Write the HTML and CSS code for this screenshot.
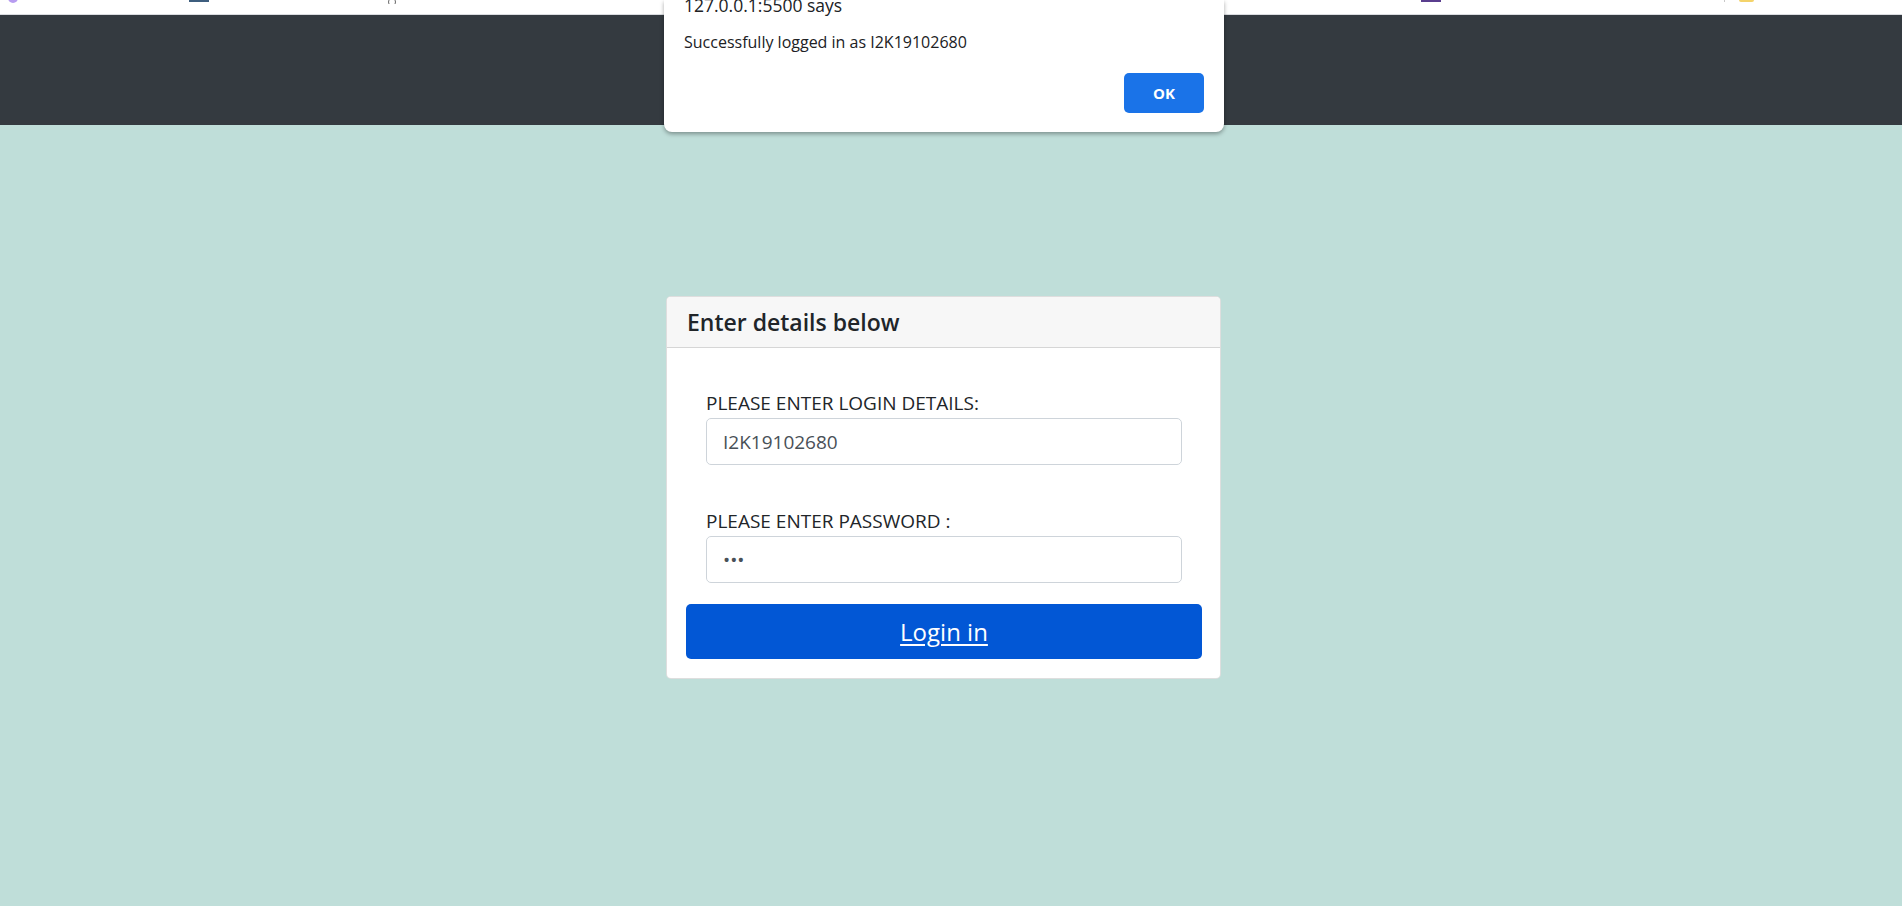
FILE: index.html
```html
<!DOCTYPE html>
<html lang="en">
<head>
<meta charset="utf-8">
<title>Login</title>
<link rel="stylesheet" href="styles.css">
</head>
<body>
<div class="bookmarks">
  <span class="bm bm-purple"></span>
  <span class="bm bm-blue"></span>
  <svg class="bm bm-paren" width="10" height="4" viewBox="0 0 10 4"><path d="M2 0 Q1 2 2 4 M8 0 Q9 2 8 4" stroke="#666" stroke-width="1" fill="none"/></svg>
  <span class="bm bm-violet"></span>
  <span class="bm bm-sep"></span>
  <span class="bm bm-yellow"></span>
</div>
<nav class="navbar"></nav>
<main class="main">
  <div class="card">
    <div class="card-header">Enter details below</div>
    <form class="card-body">
      <div class="field">
        <label class="label">PLEASE ENTER LOGIN DETAILS:</label>
        <input class="input" type="text" value="I2K19102680">
      </div>
      <div class="field field-2">
        <label class="label">PLEASE ENTER PASSWORD :</label>
        <input class="input" type="password" value="abc">
      </div>
      <button class="btn" type="button">Login in</button>
    </form>
  </div>
</main>
<div class="dialog">
  <div class="dialog-title">127.0.0.1:5500 says</div>
  <div class="dialog-msg">Successfully logged in as I2K19102680</div>
  <div class="dialog-actions"><button class="ok" type="button">OK</button></div>
</div>
</body>
</html>
```
FILE: styles.css
```css
html, body {
  margin: 0;
  padding: 0;
}
body {
  background: #bfded9;
  font-family: "Open Sans", "Noto Sans", sans-serif;
  color: #212529;
  height: 906px;
  overflow: hidden;
  position: relative;
}
.bookmarks {
  height: 14px;
  background: #fff;
  border-bottom: 1px solid #dadce0;
  display: flex;
  align-items: flex-start;
  overflow: hidden;
}
.bm { display: block; flex: none; }
.bm-purple {
  width: 10px; height: 5px; margin-left: 8px; margin-top: -2px;
  background: #b79cf0; border-radius: 0 0 5px 5px;
}
.bm-blue {
  width: 20px; height: 2px; margin-left: 171px;
  background: #3e5e7e;
}
.bm-paren {
  margin-left: 178px;
}
.bm-violet {
  width: 20px; height: 2px; margin-left: 1024px;
  background: #5a3e8e;
}
.bm-sep {
  width: 1px; height: 2px; margin-left: 283px;
  background: #c8c8c8;
}
.bm-yellow {
  width: 15px; height: 2px; margin-left: 14px;
  background: #f4d36a; border-radius: 0 0 3px 3px;
}
.navbar {
  height: 110px;
  background: #343a40;
}
.main {
  padding: 171px 0 0 666px;
}
.card {
  width: 555px;
  box-sizing: border-box;
  background: #fff;
  border: 1px solid rgba(0,0,0,.13);
  border-radius: 5px;
  overflow: hidden;
}
.card-header {
  height: 51px;
  box-sizing: border-box;
  padding: 0 20px;
  background: #f7f7f7;
  border-bottom: 1px solid #d6d6d6;
  display: flex;
  align-items: center;
  font-size: 23px;
  font-weight: 600;
  color: #212529;
}
.card-body {
  display: flex;
  flex-direction: column;
  padding: 44px 0 19px 0;
  margin: 0;
}
.field {
  display: flex;
  flex-direction: column;
  padding-left: 39px;
}
.field-2 { margin-top: 45px; }
.label {
  font-size: 19px;
  line-height: 23px;
  color: #212529;
  margin-bottom: 3px;
}
.input {
  width: 476px;
  height: 47px;
  box-sizing: border-box;
  border: 1px solid #ced4da;
  border-radius: 5px;
  padding: 0 16px;
  font-family: "Open Sans", "Noto Sans", sans-serif;
  font-size: 19px;
  color: #495057;
  background: #fff;
  outline: none;
}
.btn {
  margin: 21px 0 0 19px;
  width: 516px;
  height: 55px;
  border: none;
  border-radius: 5px;
  background: #0257d5;
  color: #fff;
  font-family: "Open Sans", "Noto Sans", sans-serif;
  font-size: 24px;
  text-decoration: underline;
  text-underline-offset: 3px;
  padding: 0;
}
.dialog {
  position: absolute;
  left: 664px;
  top: 0;
  width: 560px;
  height: 132px;
  box-sizing: border-box;
  background: #fff;
  border-radius: 0 0 8px 8px;
  box-shadow: 0 2px 4px rgba(0,0,0,.35);
  padding: 0 20px 0 20px;
  font-family: "Open Sans", "Noto Sans", sans-serif;
}
.dialog-title {
  font-size: 17.5px;
  line-height: 20px;
  margin-top: -5px;
  color: #202124;
}
.dialog-msg {
  font-size: 16px;
  line-height: 20px;
  margin-top: 17px;
  color: #202124;
}
.dialog-actions {
  display: flex;
  justify-content: flex-end;
  margin-top: 21px;
}
.ok {
  width: 80px;
  height: 40px;
  border: none;
  border-radius: 5px;
  background: #1a73e8;
  color: #fff;
  font-family: "Open Sans", "Noto Sans", sans-serif;
  font-weight: 700;
  font-size: 15px;
}
```
